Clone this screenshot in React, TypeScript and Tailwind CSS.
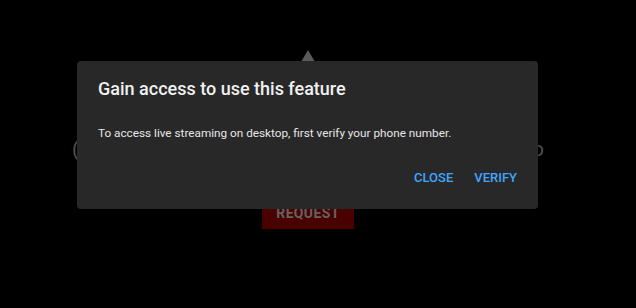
import React from 'react';

const font = { fontFamily: 'Roboto, "Noto Sans", sans-serif' };

const Backdrop: React.FC = () => (
  <div className="flex h-[308px] w-full flex-col bg-black">
    <div className="ml-[72px] flex w-[472px] flex-col items-center pt-[50px]">
      <div className="h-0 w-0 border-x-[7px] border-b-[12px] border-x-transparent border-b-[#5a5a5a]" />
      <div className="mt-[75px] flex w-full justify-between text-[20px] leading-[24px] text-[#505050]">
        <span>(</span>
        <span>o</span>
      </div>
      <div className="mt-[39px] flex h-[29px] w-[92px] items-end justify-center bg-[#4a0000] pb-[5px] text-[14px] font-bold tracking-wide text-[#626262]">
        REQUEST
      </div>
    </div>
  </div>
);

const Dialog: React.FC = () => (
  <div className="absolute left-[77px] top-[61px] flex h-[148px] w-[461px] flex-col rounded-[4px] bg-[#282828]">
    <div className="px-[21px] pt-[16px] text-[18px] font-medium leading-[24px] text-[#f1f1f1]">
      Gain access to use this feature
    </div>
    <div className="px-[21px] pt-[24px] text-[11.75px] leading-[16px] text-[#e6e6e6]">
      To access live streaming on desktop, first verify your phone number.
    </div>
    <div className="mt-auto flex justify-end gap-[21px] pb-[23px] pr-[21px] text-[13px] font-medium leading-[16px] text-[#3ea6ff]">
      <button>CLOSE</button>
      <button>VERIFY</button>
    </div>
  </div>
);

const App: React.FC = () => (
  <div className="relative h-[308px] w-[636px] overflow-hidden bg-black" style={font}>
    <Backdrop />
    <Dialog />
  </div>
);

export default App;
